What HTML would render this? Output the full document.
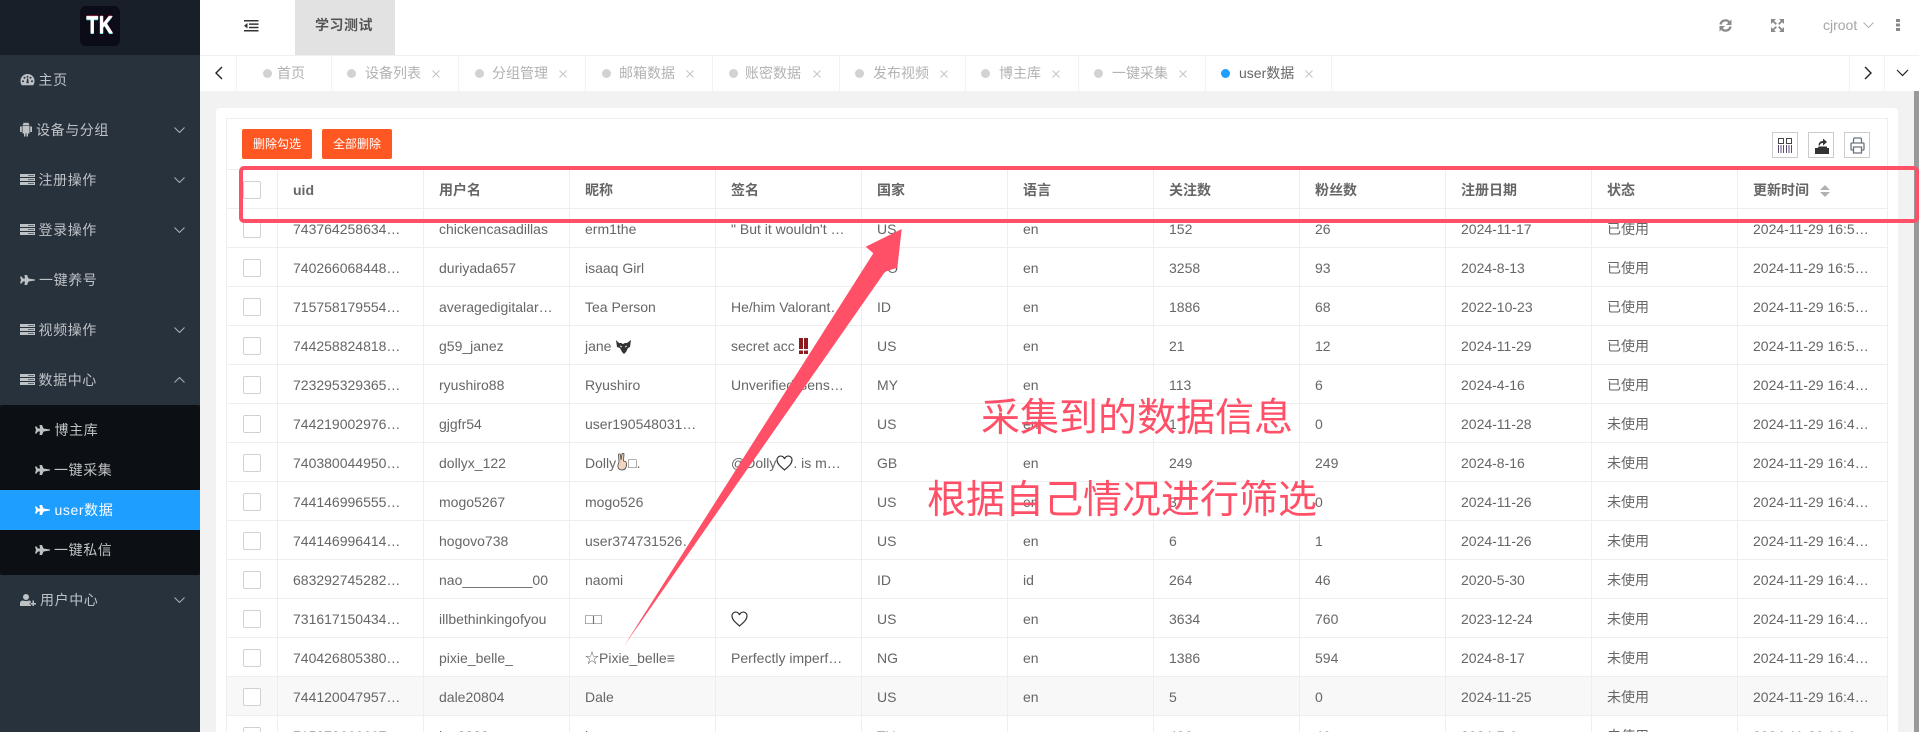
<!DOCTYPE html>
<html lang="zh"><head><meta charset="utf-8"><title>学习测试</title>
<style>
*{box-sizing:border-box}
html,body{margin:0;padding:0;width:1919px;height:732px;overflow:hidden;background:#f2f2f2;font-family:"Liberation Sans","Noto Sans CJK SC",sans-serif;font-size:14px;color:#666}
#wrap{position:relative;width:1919px;height:732px;overflow:hidden;background:#f2f2f2}
.abs{position:absolute}
#side{left:0;top:0;width:200px;height:732px;background:#28323d}
#logo{left:0;top:0;width:200px;height:55px;background:#191f28}
#lb{left:80px;top:6px;width:40px;height:40px;border-radius:6px;background:#0c0c18;color:#fff;font:bold 24px/40px "Liberation Sans",sans-serif;text-align:center;text-shadow:0 -1px #e8335a,0 1px #25dfe0;-webkit-text-stroke:.7px #fff}
#lb span{display:inline-block;transform:scaleX(.8);letter-spacing:1px}
.m{position:absolute;left:0;width:200px;height:40px;line-height:40px;color:#bfc2c5;letter-spacing:.6px;white-space:nowrap}
.m svg{position:absolute;fill:#bfc2c5}
.m b{font-weight:400;position:absolute;top:0}
.chev{position:absolute;left:174px;top:17px;width:11px;height:6px;fill:none!important;stroke:#aeb2b6;stroke-width:1}
#sub{left:0;top:405px;width:200px;height:170px;background:#0c0f13;border-radius:2px}
#act{left:0;top:490px;width:200px;height:40px;background:#1e9fff}
#hd{left:200px;top:0;width:1719px;height:56px;background:#fff;border-bottom:1px solid #f0f0f0}
#tabt{left:295px;top:0;width:100px;height:55px;background:#e2e2e2;font-weight:700;color:#555;text-align:center;line-height:50px;letter-spacing:.5px;text-indent:-2px}
#tabs{left:200px;top:56px;width:1719px;height:35px;background:#fff}
.tb{position:absolute;top:56px;height:35px;border-right:1px solid #f2f2f2;background:#fff;line-height:35px;color:#b2b2b2;white-space:nowrap}
.tb i{position:absolute;top:13px;width:9px;height:9px;border-radius:50%;background:#d2d2d2}
.tb b{font-weight:400;position:absolute;top:0}
.tb svg{position:absolute;top:14px;left:0;width:8px;height:8px;stroke:#c4c4c4;stroke-width:1;fill:none}
#card{left:216px;top:108px;width:1682px;height:624px;background:#fff;border-radius:4px 4px 0 0}
#box{left:226px;top:118px;width:1662px;height:614px;border:1px solid #eee;border-bottom:0;background:#fff}
.btn{position:absolute;top:129px;width:70px;height:30px;background:#ff5722;border-radius:2px;color:#fff;font-size:12px;line-height:30px;text-align:center}
.tool{position:absolute;top:132px;width:26px;height:26px;border:1px solid #ccc;background:#fff}
table{position:absolute;left:226px;top:169px;border-collapse:separate;border-spacing:0;table-layout:fixed;width:1662px;border-top:1px solid #eee;border-left:1px solid #eee;background:#fff}
td,th{height:39px;padding:2px 0 0 15px;border-right:1px solid #eee;border-bottom:1px solid #eee;text-align:left;white-space:nowrap;overflow:hidden;font-size:14px;color:#666;font-weight:400;line-height:20px}
th{font-weight:700;color:#666}
td:first-child,th:first-child{padding:2px 0 0 16px}
.cb{display:block;width:18px;height:18px;border:1px solid #d2d2d2;border-radius:2px;background:#fff}
tr.h td{background:#f8f8f8}
.n{display:inline-block;vertical-align:-3px}
.ov{position:absolute;color:#ff5068;font-size:39px;line-height:44px;font-family:"Liberation Sans","Noto Sans CJK SC",sans-serif;font-weight:400;white-space:nowrap}
</style></head><body>
<div id="wrap">

<div class="abs" id="side"></div>
<div class="abs" id="logo"></div>
<div class="abs" id="lb"><span>TK</span></div>
<div class="abs" id="sub"></div>
<div class="abs" id="act"></div>

<div class="m" style="top:60px"><svg style="left:20px;top:13px" width="15" height="13" viewBox="0 0 15 13"><path fill-rule="evenodd" d="M7.500 1A7 7 0 0 0 .5 8c0 1.600.5 3 1.300 4.300h11.400C14 11 14.500 9.600 14.500 8a7 7 0 0 0-7-7zM3 7.200a1 1 0 1 1 0 2 1 1 0 0 1 0-2zm1.500-3.500a1 1 0 1 1 0 2 1 1 0 0 1 0-2zm3-1a1 1 0 1 1 0 2 1 1 0 0 1 0-2zm3 1a1 1 0 1 1 0 2 1 1 0 0 1 0-2zM12 7.200a1 1 0 1 1 0 2 1 1 0 0 1 0-2zM7 5.500h1.200l.6 4.800H6.400z"/></svg><b style="left:38.500px">主页</b></div>

<div class="m" style="top:110px"><svg style="left:20px;top:12px" width="12" height="15" viewBox="0 0 12 15"><path d="M2.500 4h7v7.500H8V14.500H6.500V11.500h-1V14.500H4V11.500H2.500zM0 4.500h1.800V10H0zM10.200 4.500H12V10h-1.800zM2.500 3.400C2.700 2 3.600 1.300 4 1L3.500.3h.4L4.500 1c1-.4 2-.4 3 0L8.100.3h.4L8 1c.5.300 1.300 1 1.500 2.400z"/></svg><b style="left:36px">设备与分组</b><svg class="chev" viewBox="0 0 11 6"><path d="M.5.500l5 5 5-5"/></svg></div>

<div class="m" style="top:160px"><svg style="left:20px;top:14px" width="15" height="11" viewBox="0 0 15 11"><path d="M0 0h15v3H0zM0 4h15v3H0zM0 8h15v3H0z"/><path d="M8 1h6v1H8zM8 5h6v1H8zM8 9h6v1H8z" fill="#5f6870"/></svg><b style="left:38.500px">注册操作</b><svg class="chev" viewBox="0 0 11 6"><path d="M.5.500l5 5 5-5"/></svg></div>

<div class="m" style="top:210px"><svg style="left:20px;top:14px" width="15" height="11" viewBox="0 0 15 11"><path d="M0 0h15v3H0zM0 4h15v3H0zM0 8h15v3H0z"/><path d="M8 1h6v1H8zM8 5h6v1H8zM8 9h6v1H8z" fill="#5f6870"/></svg><b style="left:38.500px">登录操作</b><svg class="chev" viewBox="0 0 11 6"><path d="M.5.500l5 5 5-5"/></svg></div>

<div class="m" style="top:260px"><svg style="left:20px;top:15px" width="15" height="10" viewBox="0 0 15 10"><path d="M0 1.500h1.500L3 3.500h2L4.500 0H7l1.500 3.500L15 4.500v1L8.500 6.500 7 10H4.500L5 6.500H3L1.500 8.500H0L1 5z"/></svg><b style="left:39px">一键养号</b></div>

<div class="m" style="top:310px"><svg style="left:20px;top:14px" width="15" height="11" viewBox="0 0 15 11"><path d="M0 0h15v3H0zM0 4h15v3H0zM0 8h15v3H0z"/><path d="M8 1h6v1H8zM8 5h6v1H8zM8 9h6v1H8z" fill="#5f6870"/></svg><b style="left:38.500px">视频操作</b><svg class="chev" viewBox="0 0 11 6"><path d="M.5.500l5 5 5-5"/></svg></div>

<div class="m" style="top:360px"><svg style="left:20px;top:14px" width="15" height="11" viewBox="0 0 15 11"><path d="M0 0h15v3H0zM0 4h15v3H0zM0 8h15v3H0z"/><path d="M8 1h6v1H8zM8 5h6v1H8zM8 9h6v1H8z" fill="#5f6870"/></svg><b style="left:38.500px">数据中心</b><svg class="chev" viewBox="0 0 11 6"><path d="M.5 5.500l5-5 5 5"/></svg></div>

<div class="m" style="top:410px"><svg style="left:35px;top:15px" width="15" height="10" viewBox="0 0 15 10"><path d="M0 1.500h1.500L3 3.500h2L4.500 0H7l1.500 3.500L15 4.500v1L8.500 6.500 7 10H4.500L5 6.500H3L1.500 8.500H0L1 5z"/></svg><b style="left:54.500px">博主库</b></div>
<div class="m" style="top:450px"><svg style="left:35px;top:15px" width="15" height="10" viewBox="0 0 15 10"><path d="M0 1.500h1.500L3 3.500h2L4.500 0H7l1.500 3.500L15 4.500v1L8.500 6.500 7 10H4.500L5 6.500H3L1.500 8.500H0L1 5z"/></svg><b style="left:54px">一键采集</b></div>
<div class="m" style="top:490px;color:#fff"><svg style="left:35px;top:15px;fill:#fff" width="15" height="10" viewBox="0 0 15 10"><path d="M0 1.500h1.500L3 3.500h2L4.500 0H7l1.500 3.500L15 4.500v1L8.500 6.500 7 10H4.500L5 6.500H3L1.500 8.500H0L1 5z"/></svg><b style="left:54.500px">user数据</b></div>
<div class="m" style="top:530px"><svg style="left:35px;top:15px" width="15" height="10" viewBox="0 0 15 10"><path d="M0 1.500h1.500L3 3.500h2L4.500 0H7l1.500 3.500L15 4.500v1L8.500 6.500 7 10H4.500L5 6.500H3L1.500 8.500H0L1 5z"/></svg><b style="left:54px">一键私信</b></div>

<div class="m" style="top:580px"><svg style="left:20px;top:14px" width="16" height="12" viewBox="0 0 16 12"><path d="M6 0a3 3 0 1 1 0 6 3 3 0 0 1 0-6zM0 12V9.500C0 7.500 1.500 6.500 3 6.500c1 .7 5 .7 6 0 .7 0 1.200.2 1.700.5V9h-1v1.800h1.300V12z"/><path d="M12.500 6.500h1.500V9h2v1.500h-2V12h-1.500v-1.500h-1.800V9h1.800z"/></svg><b style="left:40px">用户中心</b><svg class="chev" viewBox="0 0 11 6"><path d="M.5.500l5 5 5-5"/></svg></div>

<div class="abs" id="hd"></div>
<svg class="abs" style="left:244px;top:20px" width="15" height="12" viewBox="0 0 15 12" fill="#333"><path d="M0 0h14.500v1.500H0zM0 10h14.500v1.500H0zM5 3.400h9.500v1.500H5zM5 6.700h9.500v1.500H5zM3.500 3v5.500L0 5.750z"/></svg>
<div class="abs" id="tabt">学习测试</div>

<svg class="abs" style="left:1719px;top:19px" width="13" height="13" viewBox="0 0 13 13" fill="none" stroke="#8a8a8a" stroke-width="2.300"><path d="M1.500 5.500A5 5 0 0 1 10.500 3.500M11.500 7.500A5 5 0 0 1 2.500 9.500"/><path d="M12.500 0.500v5.500H7z M.5 12.500V7h5.500z" fill="#8a8a8a" stroke="none"/></svg>
<svg class="abs" style="left:1771px;top:19px" width="13" height="13" viewBox="0 0 13 13" fill="#8a8a8a" stroke="none"><path d="M0 0h5L0 5zM13 0v5L8 0zM0 13V8l5 5zM13 13H8l5-5z"/><path d="M2 2l3.300 3.300M11 2L7.700 5.300M2 11l3.300-3.300M11 11L7.700 7.700" fill="none" stroke="#8a8a8a" stroke-width="1.800"/></svg>
<div class="abs" style="left:1823px;top:15px;line-height:20px;color:#a5a5a5">cjroot</div>
<svg class="abs" style="left:1863px;top:22px" width="11" height="6" viewBox="0 0 11 6" fill="none" stroke="#b0b0b0"><path d="M.5.500l5 5 5-5"/></svg>
<svg class="abs" style="left:1896px;top:19px" width="4" height="12" viewBox="0 0 4 12" fill="#888"><path d="M0 0h4v3H0zM0 4.500h4v3H0zM0 9h4v3H0z"/></svg>

<div class="abs" id="tabs"></div>
<div class="tb" style="left:200px;width:37px"><svg style="left:15px;top:10px;width:8px;height:14px;stroke:#222;stroke-width:1.400" viewBox="0 0 8 14"><path d="M7 1L1 7l6 6"/></svg></div>
<div class="tb" style="left:237px;width:95px"><i style="left:26px"></i><b style="left:40px">首页</b></div>
<div class="tb" style="left:332px;width:127px"><i style="left:15px"></i><b style="left:33px">设备列表</b><svg style="left:100px" viewBox="0 0 8 8"><path d="M.5.500l7 7M7.500.500l-7 7"/></svg></div>
<div class="tb" style="left:459px;width:127px"><i style="left:16px"></i><b style="left:33px">分组管理</b><svg style="left:100px" viewBox="0 0 8 8"><path d="M.5.500l7 7M7.500.500l-7 7"/></svg></div>
<div class="tb" style="left:586px;width:127px"><i style="left:16px"></i><b style="left:33px">邮箱数据</b><svg style="left:100px" viewBox="0 0 8 8"><path d="M.5.500l7 7M7.500.500l-7 7"/></svg></div>
<div class="tb" style="left:713px;width:127px"><i style="left:16px"></i><b style="left:32px">账密数据</b><svg style="left:100px" viewBox="0 0 8 8"><path d="M.5.500l7 7M7.500.500l-7 7"/></svg></div>
<div class="tb" style="left:840px;width:126px"><i style="left:15px"></i><b style="left:33px">发布视频</b><svg style="left:100px" viewBox="0 0 8 8"><path d="M.5.500l7 7M7.500.500l-7 7"/></svg></div>
<div class="tb" style="left:966px;width:113px"><i style="left:15px"></i><b style="left:33px">博主库</b><svg style="left:86px" viewBox="0 0 8 8"><path d="M.5.500l7 7M7.500.500l-7 7"/></svg></div>
<div class="tb" style="left:1079px;width:127px"><i style="left:15px"></i><b style="left:33px">一键采集</b><svg style="left:100px" viewBox="0 0 8 8"><path d="M.5.500l7 7M7.500.500l-7 7"/></svg></div>
<div class="tb" style="left:1206px;width:126px;color:#666"><i style="left:15px;background:#1e9fff"></i><b style="left:33px">user数据</b><svg style="left:99px" viewBox="0 0 8 8"><path d="M.5.500l7 7M7.500.500l-7 7"/></svg></div>
<div class="tb" style="left:1849px;width:36px;border-left:1px solid #f2f2f2;border-right:1px solid #f2f2f2"><svg style="left:14px;top:10px;width:8px;height:14px;stroke:#222;stroke-width:1.400" viewBox="0 0 8 14"><path d="M1 1l6 6-6 6"/></svg></div>
<svg class="abs" style="left:1896px;top:69px" width="13" height="8" viewBox="0 0 13 8" fill="none" stroke="#222" stroke-width="1.200"><path d="M1 1l5.500 5.500L12 1"/></svg>

<div class="abs" style="left:1914px;top:91px;width:5px;height:641px;background:#999"></div>
<div class="abs" id="card"></div>
<div class="abs" id="box"></div>
<div class="btn" style="left:242px">删除勾选</div>
<div class="btn" style="left:322px">全部删除</div>
<div class="tool" style="left:1772px"><svg style="position:absolute;left:5px;top:5px" width="14" height="15" viewBox="0 0 14 15" fill="none" stroke="#444"><path d="M.5.500h5v5h-5zM8.500.500h5v5h-5z"/><path d="M.5 7v8M3 7v8M5.500 7v8M8.500 7v8M11 7v8M13.500 7v8" stroke="#5b4a72"/></svg></div>
<div class="tool" style="left:1808px"><svg style="position:absolute;left:6px;top:4px" width="14" height="17" viewBox="0 0 14 17" fill="#333"><path d="M0 11h2.500L4 9.500h8V11h2v6H0z"/><path d="M3.500 8.500C3.500 5.500 5.500 4 8 4V1.500L12 5 8 8.500V6C6.300 6 5 6.800 4.700 8.500z"/></svg></div>
<div class="tool" style="left:1844px"><svg style="position:absolute;left:5px;top:4px" width="15" height="17" viewBox="0 0 15 17" fill="none" stroke="#6a7480" stroke-width="1.300"><path d="M3.500 6V2.500c0-1 .5-1.500 1.500-1.500h5c1 0 1.500.5 1.500 1.500V6M3.500 13H2c-.7 0-1-.3-1-1V7c0-.7.3-1 1-1h11c.7 0 1 .3 1 1v5c0 .7-.3 1-1 1h-1.500M3.500 10h8v6h-8z"/></svg></div>

<table>
<colgroup><col style="width:51px"><col style="width:146px"><col style="width:146px"><col style="width:146px"><col style="width:146px"><col style="width:146px"><col style="width:146px"><col style="width:146px"><col style="width:146px"><col style="width:146px"><col style="width:146px"><col style="width:150px"></colgroup>
<tr><th><span class="cb"></span></th><th>uid</th><th>用户名</th><th>昵称</th><th>签名</th><th>国家</th><th>语言</th><th>关注数</th><th>粉丝数</th><th>注册日期</th><th>状态</th><th>更新时间 <svg class="n" style="margin-left:7px;vertical-align:-2px" width="10" height="12" viewBox="0 0 10 12" fill="#b2b2b2"><path d="M5 0l5 5H0zM5 12L0 7h10z"/></svg></th></tr>
<tr><td><span class="cb"></span></td><td>743764258634…</td><td>chickencasadillas</td><td>erm1the</td><td>" But it wouldn't …</td><td>US</td><td>en</td><td>152</td><td>26</td><td>2024-11-17</td><td>已使用</td><td>2024-11-29 16:5…</td></tr>
<tr><td><span class="cb"></span></td><td>740266068448…</td><td>duriyada657</td><td>isaaq Girl</td><td></td><td>CO</td><td>en</td><td>3258</td><td>93</td><td>2024-8-13</td><td>已使用</td><td>2024-11-29 16:5…</td></tr>
<tr><td><span class="cb"></span></td><td>715758179554…</td><td>averagedigitalar…</td><td>Tea Person</td><td>He/him Valorant…</td><td>ID</td><td>en</td><td>1886</td><td>68</td><td>2022-10-23</td><td>已使用</td><td>2024-11-29 16:5…</td></tr>
<tr><td><span class="cb"></span></td><td>744258824818…</td><td>g59_janez</td><td>jane <svg class="n" width="17" height="15" viewBox="0 0 17 15" fill="#333"><path d="M1 1l3 3h2l2 1 2-1h2l4-3-1 7-2 1-2 4-2 2-2-2-2-4-3-1z"/><path d="M5 7l2 1M12 7l-2 1" stroke="#ccc"/></svg></td><td>secret acc <svg class="n" width="9" height="16" viewBox="0 0 9 16"><path d="M0 0h4v11H0zM5 0h4v11H5zM0 12.500h4V16H0zM5 12.500h4V16H5z" fill="#8c1d1d"/></svg></td><td>US</td><td>en</td><td>21</td><td>12</td><td>2024-11-29</td><td>已使用</td><td>2024-11-29 16:5…</td></tr>
<tr><td><span class="cb"></span></td><td>723295329365…</td><td>ryushiro88</td><td>Ryushiro</td><td>Unverified Sens…</td><td>MY</td><td>en</td><td>113</td><td>6</td><td>2024-4-16</td><td>已使用</td><td>2024-11-29 16:4…</td></tr>
<tr><td><span class="cb"></span></td><td>744219002976…</td><td>gjgfr54</td><td>user190548031…</td><td></td><td>US</td><td>en</td><td>1</td><td>0</td><td>2024-11-28</td><td>未使用</td><td>2024-11-29 16:4…</td></tr>
<tr><td><span class="cb"></span></td><td>740380044950…</td><td>dollyx_122</td><td>Dolly<svg class="n" width="12" height="18" viewBox="0 0 12 18"><path d="M3 9L2.500 2c0-1.500 2-1.500 2 0L5 7l1-6c.3-1.300 2-1 2 .3L7.500 8c2 0 3 1 3 3 0 4-1.500 6-4.500 6-3 0-4.500-2-4-5z" fill="#f2d5c0" stroke="#444" stroke-width=".8"/></svg>&#9633;.</td><td>@Dolly<svg class="n" width="17" height="16" viewBox="0 0 17 16" fill="none" stroke="#333" stroke-width="1.200"><path d="M8.500 15C4 11 1 8.500 1 5a3.800 3.800 0 0 1 7.500-1A3.800 3.800 0 0 1 16 5c0 3.500-3 6-7.500 10z"/></svg>. is m…</td><td>GB</td><td>en</td><td>249</td><td>249</td><td>2024-8-16</td><td>未使用</td><td>2024-11-29 16:4…</td></tr>
<tr><td><span class="cb"></span></td><td>744146996555…</td><td>mogo5267</td><td>mogo526</td><td></td><td>US</td><td>en</td><td>3</td><td>0</td><td>2024-11-26</td><td>未使用</td><td>2024-11-29 16:4…</td></tr>
<tr><td><span class="cb"></span></td><td>744146996414…</td><td>hogovo738</td><td>user374731526…</td><td></td><td>US</td><td>en</td><td>6</td><td>1</td><td>2024-11-26</td><td>未使用</td><td>2024-11-29 16:4…</td></tr>
<tr><td><span class="cb"></span></td><td>683292745282…</td><td>nao_________00</td><td>naomi</td><td></td><td>ID</td><td>id</td><td>264</td><td>46</td><td>2020-5-30</td><td>未使用</td><td>2024-11-29 16:4…</td></tr>
<tr><td><span class="cb"></span></td><td>731617150434…</td><td>illbethinkingofyou</td><td>&#9633;&#9633;</td><td><svg class="n" width="17" height="16" viewBox="0 0 17 16" fill="none" stroke="#333" stroke-width="1.200"><path d="M8.500 15C4 11 1 8.500 1 5a3.800 3.800 0 0 1 7.500-1A3.800 3.800 0 0 1 16 5c0 3.500-3 6-7.500 10z"/></svg></td><td>US</td><td>en</td><td>3634</td><td>760</td><td>2023-12-24</td><td>未使用</td><td>2024-11-29 16:4…</td></tr>
<tr><td><span class="cb"></span></td><td>740426805380…</td><td>pixie_belle_</td><td>☆Pixie_belle≡</td><td>Perfectly imperf…</td><td>NG</td><td>en</td><td>1386</td><td>594</td><td>2024-8-17</td><td>未使用</td><td>2024-11-29 16:4…</td></tr>
<tr class="h"><td><span class="cb"></span></td><td>744120047957…</td><td>dale20804</td><td>Dale</td><td></td><td>US</td><td>en</td><td>5</td><td>0</td><td>2024-11-25</td><td>未使用</td><td>2024-11-29 16:4…</td></tr>
<tr><td><span class="cb"></span></td><td>715373666667…</td><td>lan8888</td><td>l</td><td></td><td>TH</td><td>en</td><td>406</td><td>46</td><td>2024-7-6</td><td>未使用</td><td>2024-11-29 16:4…</td></tr>
</table>

<svg class="abs" style="left:0;top:0;pointer-events:none" width="1919" height="732" viewBox="0 0 1919 732">
<rect x="241" y="168" width="1676" height="53" rx="3" fill="none" stroke="#ff5068" stroke-width="4"/>
<path d="M901.700 229L865.700 246.700 873.300 253.300 624 646 885 271.700 897.300 267.700z" fill="#ff5068"/>
</svg>
<div class="ov" style="left:981px;top:397px">采集到的数据信息</div>
<div class="ov" style="left:927px;top:479px">根据自己情况进行筛选</div>
</div>
</body></html>
